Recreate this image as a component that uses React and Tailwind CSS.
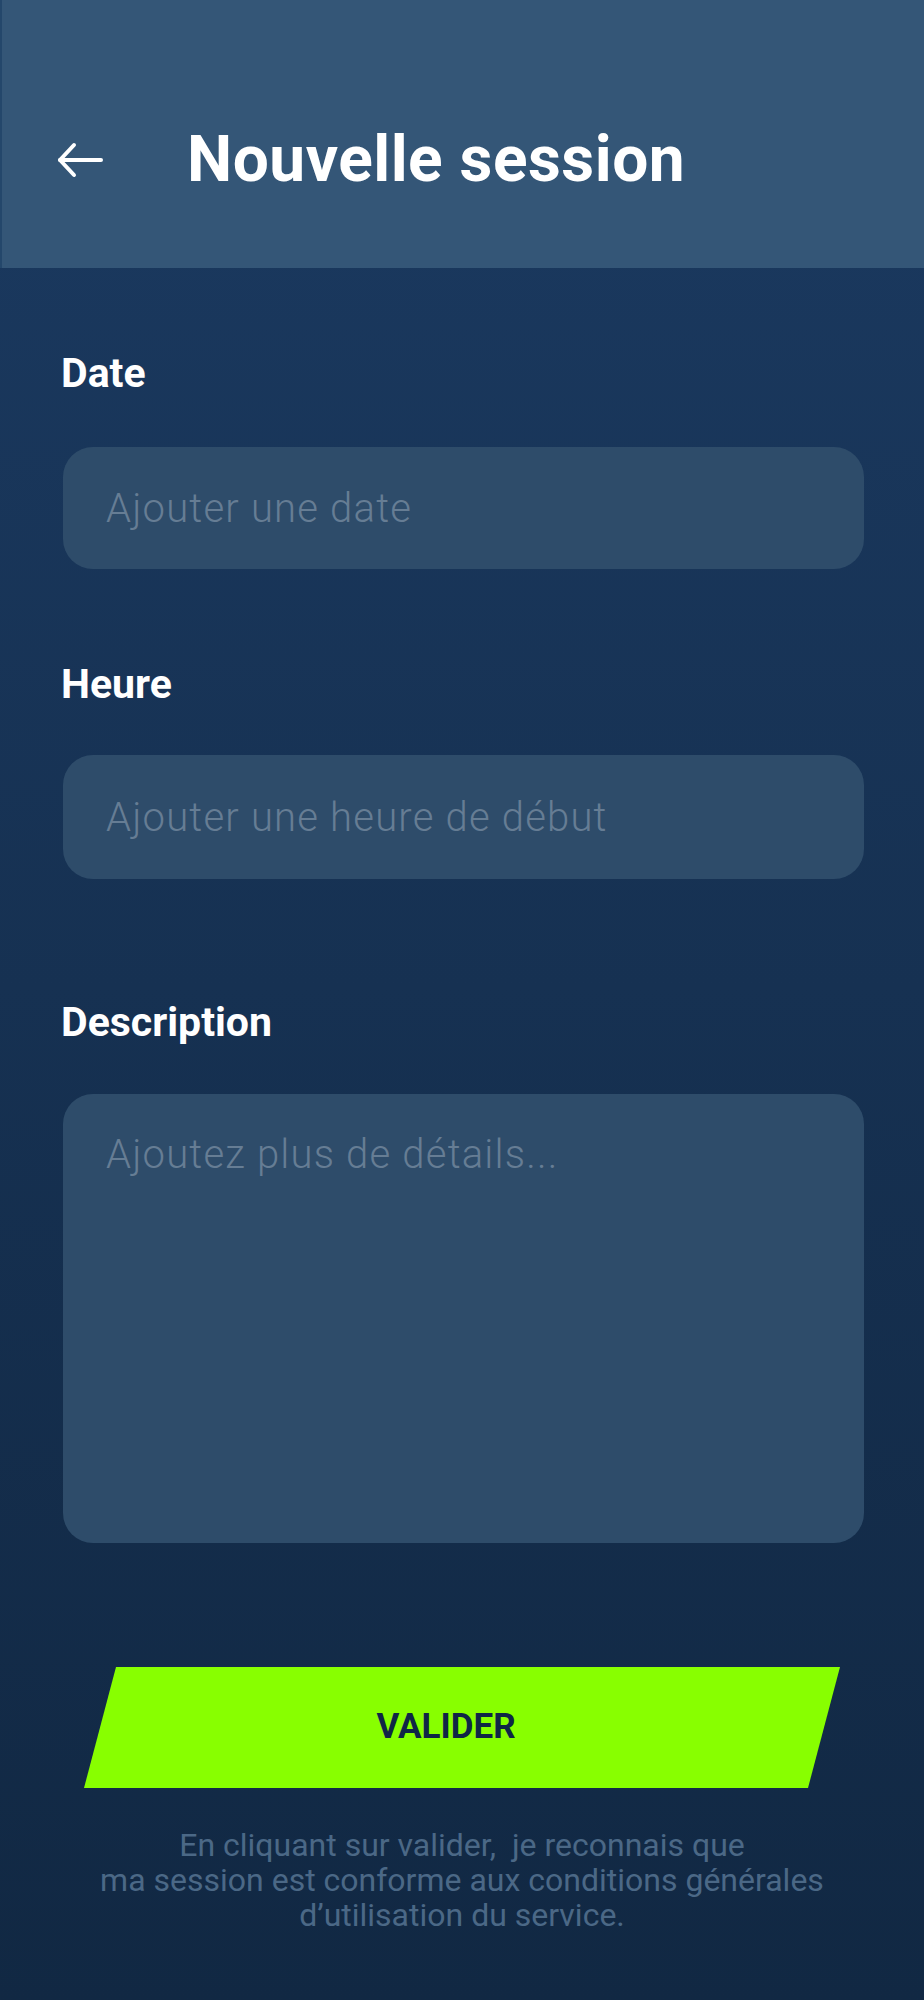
import React, { useState } from 'react'

const BackArrow = () => (
    <svg width="46" height="36" viewBox="0 0 46 36" fill="none" stroke="white" strokeWidth="4" strokeLinecap="round" strokeLinejoin="round">
        <path d="M44 18 H3" />
        <path d="M17 3 L3 18 L17 33" />
    </svg>
)

const Label = ({ children }) => (
    <label className='block text-[41px] leading-none font-bold text-white'>{children}</label>
)

const Field = ({ label, placeholder, value, onChange, gap, height }) => (
    <div>
        <Label>{label}</Label>
        <input
            type='text'
            value={value}
            onChange={(e) => onChange(e.target.value)}
            placeholder={placeholder}
            className={`${gap} ${height} ml-[2px] w-[calc(100%-2px)] rounded-[30px] bg-[#2e4c6a] px-[43px] text-[40px] tracking-[1.2px] font-light text-white placeholder:text-[#667d94] outline-none`}
        />
    </div>
)

const App = () => {
    const [date, setDate] = useState('')
    const [hour, setHour] = useState('')
    const [description, setDescription] = useState('')

    return (
        <div className='min-h-[2000px] bg-linear-to-b from-[#1b3a61] to-[#112843] font-["Roboto","Noto_Sans",sans-serif]'>
            <header className='h-[268px] bg-[#345677] border-l-2 border-[#24476b] flex items-center pt-[52px] pl-[55px]'>
                <button aria-label='Retour'><BackArrow /></button>
                <h1 className='ml-[84px] text-[64px] font-bold text-white tracking-[0.5px]'>Nouvelle session</h1>
            </header>

            <main className='pl-[61px] pr-[60px]'>
                <div className='pt-[85px]'>
                    <Field label='Date' placeholder='Ajouter une date' value={date} onChange={setDate} gap='mt-[53px]' height='h-[122px]' />
                </div>
                <div className='pt-[95px]'>
                    <Field label='Heure' placeholder='Ajouter une heure de début' value={hour} onChange={setHour} gap='mt-[50px]' height='h-[124px]' />
                </div>
                <div className='pt-[123px]'>
                    <Label>Description</Label>
                    <textarea
                        value={description}
                        onChange={(e) => setDescription(e.target.value)}
                        placeholder='Ajoutez plus de détails...'
                        className='mt-[51px] ml-[2px] block w-[calc(100%-2px)] h-[449px] resize-none rounded-[30px] bg-[#2e4c6a] px-[43px] pt-[31px] text-[40px] tracking-[1.2px] font-light text-white placeholder:text-[#667d94] outline-none'
                    />
                </div>
            </main>

            <div className='pt-[124px] flex justify-center'>
                <button className='w-[756px] h-[121px] bg-[#88ff00] [clip-path:polygon(32px_0,100%_0,calc(100%_-_32px)_100%,0_100%)] pr-[32px] text-[35px] font-bold text-[#0f2646]'>
                    VALIDER
                </button>
            </div>

            <p className='mt-[40px] text-center text-[32px] leading-[35px] text-[#4b6886] whitespace-pre'>
                {'En cliquant sur valider,  je reconnais que\nma session est conforme aux conditions générales\nd\u2019utilisation du service.'}
            </p>
        </div>
    )
}

export default App
